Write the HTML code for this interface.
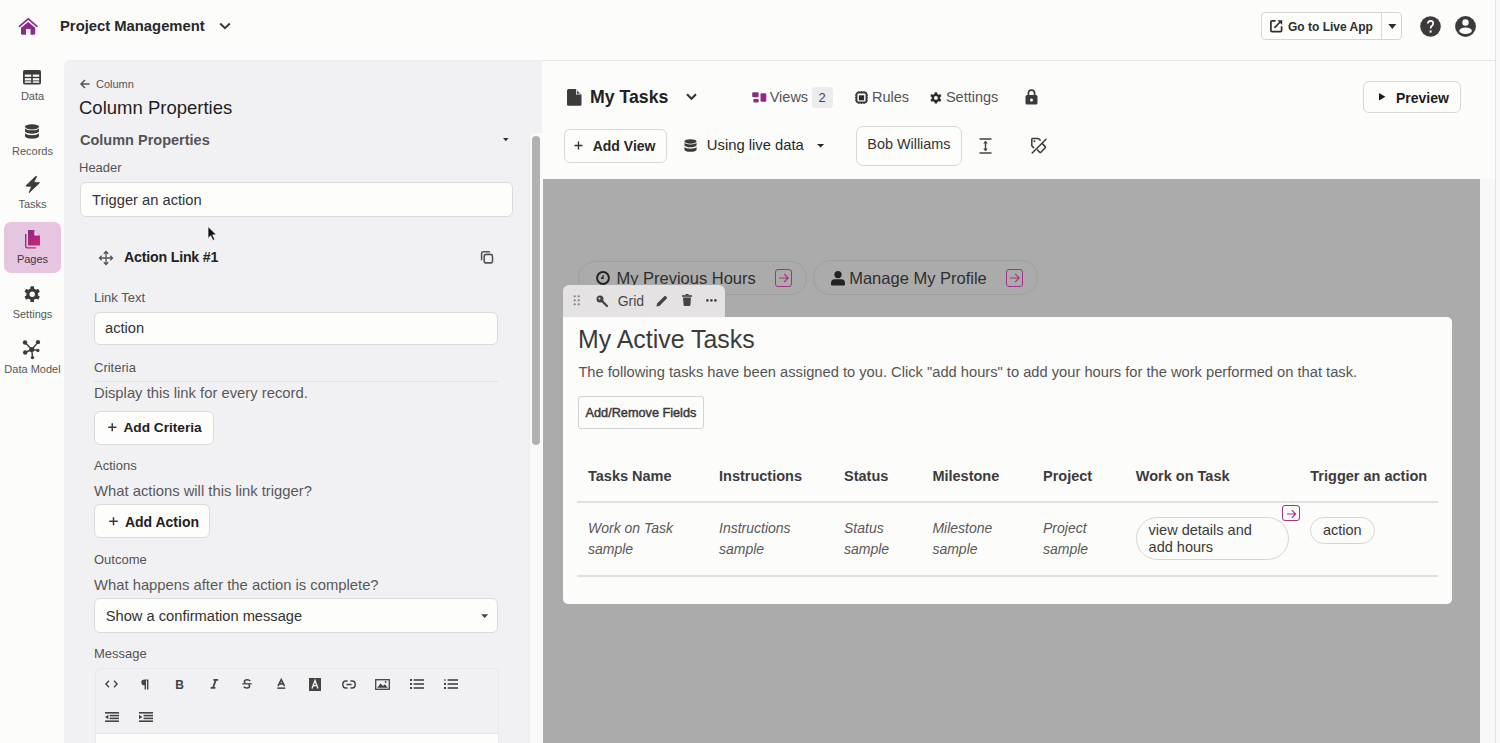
<!DOCTYPE html>
<html><head><meta charset="utf-8">
<style>
*{box-sizing:border-box;margin:0;padding:0}
html,body{width:1500px;height:743px;overflow:hidden;background:#fcfcfb;font-family:"Liberation Sans",sans-serif;color:#333}
.a{position:absolute}
.t{position:absolute;line-height:1;white-space:nowrap}
svg{position:absolute;overflow:visible}
.nav{font-size:11px;color:#5a5758;width:65px;left:0;text-align:center}
.lbl{font-size:13px;color:#555356}
.desc{font-size:14.8px;color:#5a585a}
.box{position:absolute;background:#fdfdfc;border:1px solid #dadadb;border-radius:6px}
.th{font-size:14.5px;font-weight:700;color:#3d3b3c}
.td{font-size:14px;font-style:italic;color:#5b595a;line-height:21px}
</style></head><body>

<!-- right strip -->
<div class="a" style="left:1480px;top:179px;width:15px;height:564px;background:#f8f8f8"></div>
<div class="a" style="left:1495px;top:0;width:1px;height:743px;background:#e3e3e3"></div>
<div class="a" style="left:1496px;top:0;width:4px;height:743px;background:#f9f9f9"></div>

<!-- top bar -->
<div class="a" style="left:542px;top:60px;width:953px;height:1px;background:#e6e6e6"></div>
<svg style="left:14px;top:12px" width="28" height="28" viewBox="0 0 28 28">
  <path d="M5.4 14.3 L14.2 6.9 L23 14.3" stroke="#8c2b89" stroke-width="1.7" fill="none" stroke-linecap="round"/>
  <path d="M14.2 9.9 L21.2 15.8 V21.6 Q21.2 22.7 20.1 22.7 H16.5 V17.1 H12 V22.7 H8.1 Q7 22.7 7 21.6 V15.8 Z" fill="#8c2b89"/>
</svg>
<div class="t" style="left:60px;top:19px;font-size:14.8px;font-weight:700;color:#2a2829">Project Management</div>
<svg style="left:219px;top:22px" width="12" height="8" viewBox="0 0 12 8"><path d="M1.2 1.5 L6 6.2 L10.8 1.5" stroke="#3a3839" stroke-width="2" fill="none"/></svg>

<div class="a" style="left:1261px;top:12px;width:141px;height:27.5px;border:1px solid #d6d6d6;border-radius:4px;background:#fdfdfc"></div>
<div class="a" style="left:1380.5px;top:13px;width:1px;height:25.5px;background:#dadada"></div>
<svg style="left:1270px;top:20px" width="13" height="13" viewBox="0 0 13 13">
  <path d="M5.6 0.9 H2.1 Q0.9 0.9 0.9 2.1 V10.5 Q0.9 11.6 2.1 11.6 H10.5 Q11.6 11.6 11.6 10.5 V6.3" stroke="#2f2d2e" stroke-width="1.7" fill="none"/>
  <path d="M4.3 7.9 L10.4 1.8" stroke="#2f2d2e" stroke-width="1.6"/>
  <path d="M7.4 0.2 H12.2 V5 Z" fill="#2f2d2e"/>
</svg>
<div class="t" style="left:1288px;top:20.8px;font-size:12px;font-weight:700;color:#2f2d2e">Go to Live App</div>
<svg style="left:1388px;top:24px" width="9" height="5" viewBox="0 0 9 5"><path d="M0.3 0 H8.3 L4.3 5 Z" fill="#2f2d2e"/></svg>
<svg style="left:1419.7px;top:16px" width="21" height="21" viewBox="0 0 21 21">
  <circle cx="10.5" cy="10.5" r="10.3" fill="#3d3a3b"/>
  <path d="M7.9 7.6 Q7.9 4.9 10.6 4.9 Q13.2 4.9 13.2 7.4 Q13.2 9 11.7 10 Q10.6 10.8 10.6 12.6" stroke="#fff" stroke-width="1.7" fill="none"/>
  <rect x="9.6" y="14.4" width="2" height="2.2" fill="#fff"/>
</svg>
<svg style="left:1455px;top:16px" width="21" height="21" viewBox="0 0 21 21">
  <circle cx="10.5" cy="10.5" r="10.4" fill="#3d3a3b"/>
  <circle cx="10.5" cy="6.5" r="3.2" fill="#fcfcfb"/>
  <ellipse cx="10.6" cy="14.75" rx="6.3" ry="3.2" fill="#fcfcfb"/>
</svg>

<!-- sidebar -->
<svg style="left:23px;top:70px" width="18" height="15" viewBox="0 0 18 15">
  <rect x="0" y="0" width="18" height="14.5" rx="1.8" fill="#3d3a3b"/>
  <rect x="1.8" y="4.6" width="6.4" height="2.2" fill="#fcfcfb"/><rect x="9.8" y="4.6" width="6.4" height="2.2" fill="#fcfcfb"/>
  <rect x="1.8" y="8.2" width="6.4" height="2.2" fill="#fcfcfb"/><rect x="9.8" y="8.2" width="6.4" height="2.2" fill="#fcfcfb"/>
  <rect x="1.8" y="11.3" width="6.4" height="1.5" fill="#fcfcfb"/><rect x="9.8" y="11.3" width="6.4" height="1.5" fill="#fcfcfb"/>
</svg>
<div class="t nav" style="top:91px">Data</div>
<svg style="left:25px;top:124px" width="14" height="16" viewBox="0 0 14 16">
  <ellipse cx="7" cy="2.8" rx="7" ry="2.6" fill="#3d3a3b"/>
  <path d="M0 4.4 C2 6.9 12 6.9 14 4.4 V7.6 C12 10.3 2 10.3 0 7.6 Z" fill="#3d3a3b"/>
  <path d="M0 9.3 C2 11.8 12 11.8 14 9.3 V12.6 C12 15.6 2 15.6 0 12.6 Z" fill="#3d3a3b"/>
</svg>
<div class="t nav" style="top:145.5px">Records</div>
<svg style="left:25px;top:176px" width="15" height="17" viewBox="0 0 15 17">
  <path d="M10.8 0.2 L1.2 9.4 Q0.6 10.2 1.6 10.2 H6.6 L4 16.8 L14.2 7.2 Q14.8 6.4 13.8 6.4 H8.8 L11.6 0.6 Z" fill="#3d3a3b" stroke="#3d3a3b" stroke-width="0.8" stroke-linejoin="round"/>
</svg>
<div class="t nav" style="top:198.6px">Tasks</div>
<div class="a" style="left:4px;top:222px;width:57px;height:51px;background:#e6c5e1;border-radius:7px"></div>
<svg style="left:24px;top:230px" width="17" height="19" viewBox="0 0 17 19">
  <defs><linearGradient id="pg" x1="0" y1="0" x2="1" y2="1"><stop offset="0" stop-color="#8d2a8a"/><stop offset="1" stop-color="#d0246f"/></linearGradient></defs>
  <path d="M1 4 V16.5 Q1 18.6 3.2 18.6 H12 V17.2 H3.4 Q2.4 17.2 2.4 16.2 V4 Z" fill="url(#pg)"/>
  <path d="M4 0 H10.4 L16 5.6 V15.6 H4 Z" fill="url(#pg)"/>
  <path d="M10.4 0 V5.6 H16 Z" fill="#f2d7ec"/>
</svg>
<div class="t nav" style="top:254px;color:#3d3a3b">Pages</div>
<svg style="left:24px;top:286px" width="16" height="16" viewBox="0 0 16 16"><circle cx="8.2" cy="8.2" r="5.85" fill="#3d3a3b"/><rect x="6.38" y="0.30" width="3.63" height="7.90" rx="0.65" fill="#3d3a3b" transform="rotate(0 8.2 8.2)"/><rect x="6.38" y="0.30" width="3.63" height="7.90" rx="0.65" fill="#3d3a3b" transform="rotate(60 8.2 8.2)"/><rect x="6.38" y="0.30" width="3.63" height="7.90" rx="0.65" fill="#3d3a3b" transform="rotate(120 8.2 8.2)"/><rect x="6.38" y="0.30" width="3.63" height="7.90" rx="0.65" fill="#3d3a3b" transform="rotate(180 8.2 8.2)"/><rect x="6.38" y="0.30" width="3.63" height="7.90" rx="0.65" fill="#3d3a3b" transform="rotate(240 8.2 8.2)"/><rect x="6.38" y="0.30" width="3.63" height="7.90" rx="0.65" fill="#3d3a3b" transform="rotate(300 8.2 8.2)"/><circle cx="8.2" cy="8.2" r="2.69" fill="#fcfcfb"/></svg>
<div class="t nav" style="top:308.6px">Settings</div>
<svg style="left:23px;top:340px" width="18" height="20" viewBox="0 0 18 20">
  <g stroke="#3d3a3b" stroke-width="1.4"><line x1="2" y1="2.5" x2="8.8" y2="9.5"/><line x1="15" y1="2.1" x2="8.8" y2="9.5"/><line x1="2.2" y1="12.5" x2="8.8" y2="9.5"/><line x1="14.8" y1="10.4" x2="8.8" y2="9.5"/><line x1="8.8" y1="9.5" x2="9.5" y2="17.6"/></g>
  <g fill="#3d3a3b"><circle cx="2" cy="2.5" r="2.2"/><circle cx="15" cy="2.1" r="2.2"/><circle cx="2.2" cy="12.5" r="2.2"/><circle cx="14.8" cy="10.4" r="1.7"/><circle cx="9.5" cy="17.6" r="1.7"/><circle cx="8.8" cy="9.5" r="2.6"/></g>
</svg>
<div class="t nav" style="top:364px">Data Model</div>

<!-- left panel -->
<div class="a" style="left:64px;top:59.5px;width:478px;height:684px;background:#f1f1f3;border-top-left-radius:6px;border-top:1px solid #ececee"></div>
<div class="a" style="left:529px;top:133px;width:13px;height:610px;border-top-left-radius:4px;background:#f9f9f9;border-left:1px solid #ececec"></div>
<div class="a" style="left:532px;top:135.5px;width:7.5px;height:309.5px;background:#b1b1b1;border-radius:4px"></div>

<svg style="left:80px;top:79px" width="10" height="10" viewBox="0 0 10 10"><path d="M9.6 5 H1.2 M5 1 L1 5 L5 9" stroke="#555" stroke-width="1.5" fill="none"/></svg>
<div class="t" style="left:96px;top:78.5px;font-size:11px;color:#555356">Column</div>
<div class="t" style="left:79px;top:98.6px;font-size:18.5px;color:#1f1e1f">Column Properties</div>
<div class="t" style="left:80px;top:133.2px;font-size:14.5px;font-weight:700;color:#555356">Column Properties</div>
<svg style="left:503px;top:137.7px" width="6" height="4" viewBox="0 0 6 4"><path d="M0 0 H5.6 L2.8 3.2 Z" fill="#333"/></svg>

<div class="t lbl" style="left:79px;top:161px">Header</div>
<div class="box" style="left:80px;top:182px;width:433px;height:35px"></div>
<div class="t" style="left:92px;top:193.3px;font-size:14.7px;color:#333">Trigger an action</div>

<svg style="left:207px;top:226px" width="11" height="16" viewBox="0 0 11 16">
  <path d="M1 0.6 V12.4 L3.7 9.7 L5.9 14.4 L7.8 13.5 L5.7 8.9 L9.4 8.8 Z" fill="#111" stroke="#fff" stroke-width="0.7"/>
</svg>

<svg style="left:98.5px;top:250.5px" width="14" height="14" viewBox="0 0 14 14">
  <path d="M7 0.5 V13.5 M0.5 7 H13.5 M4.8 2.7 L7 0.5 L9.2 2.7 M4.8 11.3 L7 13.5 L9.2 11.3 M2.7 4.8 L0.5 7 L2.7 9.2 M11.3 4.8 L13.5 7 L11.3 9.2" stroke="#555" stroke-width="1.3" fill="none"/>
</svg>
<div class="t" style="left:124px;top:250.4px;font-size:14.2px;letter-spacing:-0.2px;font-weight:700;color:#222">Action Link #1</div>
<svg style="left:479.5px;top:249.5px" width="15" height="15" viewBox="0 0 15 15">
  <rect x="4.2" y="4.4" width="8.3" height="8.5" rx="2" stroke="#555" stroke-width="1.6" fill="none"/>
  <path d="M1.6 10.3 V3.4 Q1.6 1.8 3.2 1.8 H9.9" stroke="#555" stroke-width="1.6" fill="none"/>
</svg>

<div class="t lbl" style="left:94px;top:291px">Link Text</div>
<div class="box" style="left:94px;top:311.7px;width:404px;height:33.5px"></div>
<div class="t" style="left:105px;top:320.9px;font-size:14.7px;color:#333">action</div>

<div class="t lbl" style="left:94px;top:360.5px">Criteria</div>
<div class="a" style="left:94px;top:380.5px;width:404px;height:1px;background:#e3e3e4"></div>
<div class="t desc" style="left:94px;top:386.2px">Display this link for every record.</div>
<div class="box" style="left:94px;top:410.5px;width:119.5px;height:34px"></div>
<svg style="left:107.5px;top:422.8px" width="9" height="9" viewBox="0 0 9 9"><path d="M4.25 0.2 V8.2 M0.2 4.2 H8.4" stroke="#3a3a3a" stroke-width="1.5"/></svg>
<div class="t" style="left:123.4px;top:420.9px;font-size:13.7px;font-weight:700;color:#222">Add Criteria</div>

<div class="t lbl" style="left:94px;top:459px">Actions</div>
<div class="t desc" style="left:94px;top:483.7px">What actions will this link trigger?</div>
<div class="box" style="left:94px;top:504.3px;width:116px;height:34px"></div>
<svg style="left:108.5px;top:517px" width="10" height="9" viewBox="0 0 10 9"><path d="M4.5 0.2 V8.2 M0.2 4.2 H8.8" stroke="#3a3a3a" stroke-width="1.5"/></svg>
<div class="t" style="left:124.9px;top:515.2px;font-size:14px;font-weight:700;color:#222">Add Action</div>

<div class="t lbl" style="left:94px;top:553.4px">Outcome</div>
<div class="t desc" style="left:94px;top:578.2px">What happens after the action is complete?</div>
<div class="box" style="left:94px;top:598px;width:404px;height:34.5px"></div>
<div class="t" style="left:105.8px;top:609.1px;font-size:14.67px;color:#333">Show a confirmation message</div>
<svg style="left:481px;top:614px" width="8" height="5" viewBox="0 0 8 5"><path d="M0.2 0.2 H7.2 L3.7 3.9 Z" fill="#444"/></svg>

<div class="t lbl" style="left:94px;top:647.2px">Message</div>
<div class="a" style="left:94.5px;top:668px;width:404px;height:90px;border:1px solid #e8e8ea;border-radius:6px;background:#f1f1f3"></div>
<div class="a" style="left:95.5px;top:732.5px;width:402px;height:20px;background:#fdfdfc;border-top:1px solid #e6e6e8"></div>

<svg style="left:105px;top:680px" width="13" height="8" viewBox="0 0 13 8"><path d="M4 0.8 L0.9 4 L4 7.2 M9 0.8 L12.1 4 L9 7.2" stroke="#444" stroke-width="1.4" fill="none"/></svg>
<svg style="left:141px;top:678.5px" width="8" height="11" viewBox="0 0 8 11"><path d="M3.6 0.5 Q0.3 0.5 0.3 3.4 Q0.3 6.2 3.6 6.2 V10.5 H5 V1.6 H6 V10.5 H7.4 V0.5 Z" fill="#444"/></svg>
<div class="t" style="left:175.3px;top:679.2px;font-size:12px;font-weight:700;color:#444">B</div>
<svg style="left:209.5px;top:679px" width="9" height="10" viewBox="0 0 9 10"><path d="M3.4 0.9 H8.2 M0.6 8.9 H5.4 M5.8 0.9 L3 8.9" stroke="#444" stroke-width="1.7" fill="none"/></svg>
<svg style="left:242px;top:679px" width="10" height="10" viewBox="0 0 10 10"><path d="M8.2 2.1 Q7.4 0.8 5.2 0.8 Q2.4 0.8 2.4 2.8 Q2.4 3.7 3.4 4.2 M6.4 5.4 Q7.6 6 7.6 7.1 Q7.6 9.1 4.9 9.1 Q2.5 9.1 1.8 7.7" stroke="#444" stroke-width="1.5" fill="none"/><path d="M0.3 4.8 H9.7" stroke="#444" stroke-width="1.3"/></svg>
<svg style="left:276.5px;top:679px" width="9" height="10" viewBox="0 0 9 10"><path d="M1 7.2 L4.25 0.6 L7.5 7.2 M2.3 4.9 H6.2" stroke="#444" stroke-width="1.6" fill="none"/><rect x="0.3" y="8.4" width="8" height="1.5" fill="#444"/></svg>
<svg style="left:308.5px;top:677.5px" width="12" height="13" viewBox="0 0 12 13"><rect x="0" y="0" width="12" height="13" fill="#444"/><path d="M3 10.5 L6 2.5 L9 10.5 M4.1 7.6 H7.9" stroke="#f1f1f2" stroke-width="1.4" fill="none"/></svg>
<svg style="left:341.5px;top:679.5px" width="14" height="9" viewBox="0 0 14 9"><path d="M5.6 1 H3.8 Q0.8 1 0.8 4.5 Q0.8 8 3.8 8 H5.6 M8.4 1 H10.2 Q13.2 1 13.2 4.5 Q13.2 8 10.2 8 H8.4 M4.4 4.5 H9.6" stroke="#444" stroke-width="1.5" fill="none"/></svg>
<svg style="left:374.5px;top:678.5px" width="15" height="11" viewBox="0 0 15 11"><rect x="0.7" y="0.7" width="13.6" height="9.6" stroke="#444" stroke-width="1.3" fill="none"/><path d="M2.2 8.8 L5.6 4.6 L8 7 L10 5.2 L12.8 8.8 Z" fill="#444"/><circle cx="10.6" cy="3" r="0.9" fill="#444"/></svg>
<svg style="left:409.5px;top:679px" width="14" height="10" viewBox="0 0 14 10"><g fill="#444"><rect x="0" y="0" width="2" height="2"/><rect x="0" y="4" width="2" height="2"/><rect x="0" y="8" width="2" height="2"/><rect x="3.6" y="0.2" width="10.4" height="1.6"/><rect x="3.6" y="4.2" width="10.4" height="1.6"/><rect x="3.6" y="8.2" width="10.4" height="1.6"/></g></svg>
<svg style="left:443.5px;top:679px" width="14" height="10" viewBox="0 0 14 10"><g fill="#444"><rect x="0.4" y="0" width="1" height="2"/><rect x="0" y="4" width="2" height="2"/><rect x="0" y="8" width="2" height="2"/><rect x="3.6" y="0.2" width="10.4" height="1.6"/><rect x="3.6" y="4.2" width="10.4" height="1.6"/><rect x="3.6" y="8.2" width="10.4" height="1.6"/></g></svg>
<svg style="left:104.5px;top:711.5px" width="14" height="10" viewBox="0 0 14 10"><g fill="#444"><rect x="0" y="0" width="14" height="1.6"/><rect x="4.6" y="2.8" width="9.4" height="1.6"/><rect x="4.6" y="5.6" width="9.4" height="1.6"/><rect x="0" y="8.4" width="14" height="1.6"/><path d="M0 5 L3.4 2.8 V7.2 Z"/></g></svg>
<svg style="left:138.5px;top:711.5px" width="14" height="10" viewBox="0 0 14 10"><g fill="#444"><rect x="0" y="0" width="14" height="1.6"/><rect x="4.6" y="2.8" width="9.4" height="1.6"/><rect x="4.6" y="5.6" width="9.4" height="1.6"/><rect x="0" y="8.4" width="14" height="1.6"/><path d="M3.4 5 L0 2.8 V7.2 Z"/></g></svg>


<!-- page header -->
<svg style="left:567px;top:89px" width="15" height="17" viewBox="0 0 15 17">
  <path d="M1.6 0 H9 L14.5 5.5 V15.2 Q14.5 16.8 12.9 16.8 H1.6 Q0 16.8 0 15.2 V1.6 Q0 0 1.6 0 Z" fill="#3d3a3b"/>
  <path d="M9 0 V5.5 H14.5 Z" fill="#fcfcfb"/><path d="M9.8 1.6 L12.9 4.7 H9.8 Z" fill="#3d3a3b"/>
</svg>
<div class="t" style="left:590px;top:89px;font-size:17.7px;font-weight:700;color:#222">My Tasks</div>
<svg style="left:686px;top:93px" width="11" height="8" viewBox="0 0 11 8"><path d="M1 1.2 L5.5 5.8 L10 1.2" stroke="#333" stroke-width="2" fill="none"/></svg>

<svg style="left:751.5px;top:92px" width="15" height="11" viewBox="0 0 15 11">
  <rect x="0.2" y="0.3" width="6.4" height="4.9" rx="1.2" fill="#8e2a86"/>
  <rect x="1.3" y="6.9" width="5.4" height="3.7" rx="1.1" fill="#8e2a86"/>
  <rect x="8.5" y="1.3" width="5.8" height="8.5" rx="1.2" fill="#8e2a86"/>
</svg>
<div class="t" style="left:769.7px;top:90.3px;font-size:14.5px;color:#555356">Views</div>
<div class="a" style="left:812px;top:87px;width:21px;height:21px;background:#ececec;border-radius:4px"></div>
<div class="t" style="left:818.5px;top:91.2px;font-size:13px;color:#444">2</div>

<svg style="left:854.5px;top:90.5px" width="13" height="13" viewBox="0 0 13 13">
  <rect x="1.5" y="1.5" width="10" height="10" rx="2" stroke="#3d3a3b" stroke-width="1.9" fill="none"/>
  <rect x="3.9" y="4.3" width="5.2" height="5" fill="#2a2829"/>
  <path d="M4 0 V1.5 M6.5 0 V1.5 M9 0 V1.5 M4 11.5 V13 M6.5 11.5 V13 M9 11.5 V13 M0 4 H1.5 M0 6.5 H1.5 M0 9 H1.5 M11.5 4 H13 M11.5 6.5 H13 M11.5 9 H13" stroke="#3d3a3b" stroke-width="1"/>
</svg>
<div class="t" style="left:872px;top:90.3px;font-size:14.5px;color:#555356">Rules</div>
<svg style="left:929.5px;top:91.5px" width="12" height="12" viewBox="0 0 12 12"><circle cx="5.9" cy="5.9" r="4.22" fill="#2e2c2d"/><rect x="4.59" y="0.20" width="2.62" height="5.70" rx="0.47" fill="#2e2c2d" transform="rotate(0 5.9 5.9)"/><rect x="4.59" y="0.20" width="2.62" height="5.70" rx="0.47" fill="#2e2c2d" transform="rotate(60 5.9 5.9)"/><rect x="4.59" y="0.20" width="2.62" height="5.70" rx="0.47" fill="#2e2c2d" transform="rotate(120 5.9 5.9)"/><rect x="4.59" y="0.20" width="2.62" height="5.70" rx="0.47" fill="#2e2c2d" transform="rotate(180 5.9 5.9)"/><rect x="4.59" y="0.20" width="2.62" height="5.70" rx="0.47" fill="#2e2c2d" transform="rotate(240 5.9 5.9)"/><rect x="4.59" y="0.20" width="2.62" height="5.70" rx="0.47" fill="#2e2c2d" transform="rotate(300 5.9 5.9)"/><circle cx="5.9" cy="5.9" r="1.94" fill="#fcfcfb"/></svg>
<div class="t" style="left:945.9px;top:90.3px;font-size:14.5px;color:#555356">Settings</div>
<svg style="left:1024.5px;top:89px" width="13" height="17" viewBox="0 0 13 17">
  <path d="M3.4 6.5 V4.3 Q3.4 1.1 6.5 1.1 Q9.6 1.1 9.6 4.3 V6.5" stroke="#3d3a3b" stroke-width="1.7" fill="none"/>
  <rect x="0.5" y="5.9" width="12" height="9.7" rx="1.7" fill="#3d3a3b"/>
  <circle cx="6.5" cy="11" r="1.5" fill="#fcfcfb"/>
</svg>

<div class="a" style="left:1363px;top:81.4px;width:97.8px;height:32px;border:1px solid #d8d8d8;border-radius:6px;background:#fdfdfc"></div>
<svg style="left:1378.8px;top:93.4px" width="7" height="8" viewBox="0 0 7 8"><path d="M0 0 L6.4 3.8 L0 7.6 Z" fill="#1e1d1e"/></svg>
<div class="t" style="left:1396px;top:90.7px;font-size:14px;font-weight:700;color:#1e1d1e">Preview</div>

<div class="a" style="left:564.3px;top:128.7px;width:102.5px;height:34px;border:1px solid #d8d8d8;border-radius:6px;background:#fdfdfc"></div>
<svg style="left:574px;top:141px" width="9" height="9" viewBox="0 0 9 9"><path d="M4.5 0.5 V8.5 M0.5 4.5 H8.5" stroke="#333" stroke-width="1.4"/></svg>
<div class="t" style="left:592.7px;top:138.6px;font-size:14px;font-weight:700;color:#2a2829">Add View</div>
<svg style="left:684px;top:139px" width="13" height="13" viewBox="0 0 14 15">
  <ellipse cx="7" cy="2.8" rx="7" ry="2.6" fill="#3d3a3b"/>
  <path d="M0 4.4 C2 6.9 12 6.9 14 4.4 V7.6 C12 10.3 2 10.3 0 7.6 Z" fill="#3d3a3b"/>
  <path d="M0 9.3 C2 11.8 12 11.8 14 9.3 V12.6 C12 15.6 2 15.6 0 12.6 Z" fill="#3d3a3b"/>
</svg>
<div class="t" style="left:706.8px;top:137.9px;font-size:14.8px;color:#2a2829">Using live data</div>
<svg style="left:817px;top:144px" width="8" height="4" viewBox="0 0 8 4"><path d="M0 0 H7.2 L3.6 3.4 Z" fill="#2a2829"/></svg>

<div class="a" style="left:856px;top:126px;width:106px;height:39.6px;border:1px solid #d8d8d8;border-radius:7px;background:#fdfdfc"></div>
<div class="t" style="left:867.3px;top:136.8px;font-size:14.4px;color:#333">Bob Williams</div>
<svg style="left:979px;top:137.5px" width="13" height="16" viewBox="0 0 13 16">
  <path d="M0.5 1 H12.5 M0.5 15 H12.5 M6.5 3.2 V12.8" stroke="#444" stroke-width="1.4"/>
  <path d="M4.2 5.4 L6.5 2.8 L8.8 5.4 Z M4.2 10.6 L6.5 13.2 L8.8 10.6 Z" fill="#444"/>
</svg>
<svg style="left:1030px;top:137px" width="18" height="18" viewBox="0 0 18 18">
  <g stroke="#3d3a3b" stroke-width="1.5" fill="none" stroke-linecap="round" stroke-linejoin="round">
  <path d="M3.6 10.6 L1.8 8.8 V2.2 Q1.8 1.5 2.5 1.5 H8 Q8.6 1.5 9.2 2.1 L10.2 3.2"/>
  <path d="M12.3 6.6 L15.3 9.6 Q15.9 10.2 15.3 10.8 L10.9 15.2 Q10.3 15.8 9.7 15.2 L7.6 13.1"/>
  <path d="M16 2.2 L2.2 16"/>
  </g>
  <circle cx="4.4" cy="4.3" r="1" fill="#3d3a3b"/>
</svg>

<!-- canvas -->
<div class="a" style="left:543px;top:179px;width:937px;height:564px;background:#ababab"></div>

<!-- pills -->
<div class="a" style="left:578px;top:260.6px;width:228.5px;height:34.6px;border:1px solid #9f9f9d;border-radius:18px"></div>
<svg style="left:596.4px;top:270.6px" width="14" height="14" viewBox="0 0 14 14">
  <circle cx="7" cy="7" r="5.9" stroke="#222" stroke-width="2" fill="none"/>
  <path d="M7 4.2 V7.2 H5" stroke="#222" stroke-width="1.4" fill="none"/>
</svg>
<div class="t" style="left:616.4px;top:269.8px;font-size:16.5px;color:#2f2e2e">My Previous Hours</div>
<div class="a" style="left:774.8px;top:269.4px;width:17.6px;height:17.3px;border:1.3px solid #a3338a;border-radius:3px"></div>
<svg style="left:777.5px;top:273px" width="12" height="10" viewBox="0 0 12 10"><path d="M1 5 H10.2 M6.2 1 L10.2 5 L6.2 9" stroke="#b02e84" stroke-width="1.15" fill="none"/></svg>

<div class="a" style="left:812.5px;top:260.3px;width:225.5px;height:35px;border:1px solid #9f9f9d;border-radius:18px"></div>
<svg style="left:830.8px;top:270.8px" width="14" height="15" viewBox="0 0 14 15">
  <circle cx="7" cy="3.6" r="3.6" fill="#222"/>
  <path d="M0 12.6 Q0 8.2 3.6 8.2 H10.4 Q14 8.2 14 12.6 V13.2 Q14 14.4 12.8 14.4 H1.2 Q0 14.4 0 13.2 Z" fill="#222"/>
</svg>
<div class="t" style="left:849.2px;top:269.7px;font-size:16.5px;color:#2f2e2e">Manage My Profile</div>
<div class="a" style="left:1005.8px;top:269.2px;width:17.5px;height:17.5px;border:1.3px solid #a3338a;border-radius:3px"></div>
<svg style="left:1008.5px;top:273px" width="12" height="10" viewBox="0 0 12 10"><path d="M1 5 H10.2 M6.2 1 L10.2 5 L6.2 9" stroke="#b02e84" stroke-width="1.15" fill="none"/></svg>

<!-- grid toolbar -->
<div class="a" style="left:563px;top:285px;width:162px;height:32px;background:#e4e2e3;border-radius:6px 6px 0 0"></div>
<svg style="left:573px;top:295px" width="8" height="12" viewBox="0 0 8 12"><g fill="#858384"><circle cx="1.7" cy="1.3" r="1.15"/><circle cx="5.7" cy="1.3" r="1.15"/><circle cx="1.7" cy="5.3" r="1.15"/><circle cx="5.7" cy="5.3" r="1.15"/><circle cx="1.7" cy="9.3" r="1.15"/><circle cx="5.7" cy="9.3" r="1.15"/></g></svg>
<svg style="left:596.4px;top:294.5px" width="12" height="12" viewBox="0 0 12 12">
  <circle cx="4" cy="4" r="3.5" fill="#444"/><circle cx="3.4" cy="3.4" r="1" fill="#e5e3e4"/>
  <path d="M5.6 5.6 L11 11" stroke="#444" stroke-width="2.2" stroke-linecap="round"/>
</svg>
<div class="t" style="left:617.7px;top:293.5px;font-size:14px;color:#4a4849">Grid</div>
<svg style="left:656.4px;top:294.5px" width="12" height="12" viewBox="0 0 12 12">
  <path d="M0.5 11.5 L1 8.6 L8.4 1.2 Q9.1 0.5 9.8 1.2 L10.8 2.2 Q11.5 2.9 10.8 3.6 L3.4 11 Z" fill="#444"/>
</svg>
<svg style="left:682px;top:294px" width="10" height="12" viewBox="0 0 10 12">
  <rect x="0" y="1.2" width="10" height="1.6" fill="#444"/><rect x="3.4" y="0" width="3.2" height="1.4" fill="#444"/>
  <path d="M1 3.4 H9 L8.4 11 Q8.3 12 7.4 12 H2.6 Q1.7 12 1.6 11 Z" fill="#444"/>
</svg>
<svg style="left:706px;top:299px" width="11" height="3" viewBox="0 0 11 3"><g fill="#444"><circle cx="1.4" cy="1.4" r="1.3"/><circle cx="5.4" cy="1.4" r="1.3"/><circle cx="9.4" cy="1.4" r="1.3"/></g></svg>

<!-- card -->
<div class="a" style="left:563px;top:316.5px;width:889px;height:287.2px;background:#fcfcfb;border-radius:0 5px 5px 5px"></div>
<div class="t" style="left:578px;top:327px;font-size:24.9px;color:#3b3b3b">My Active Tasks</div>
<div class="t" style="left:578.4px;top:364.7px;font-size:14.7px;color:#555">The following tasks have been assigned to you. Click "add hours" to add your hours for the work performed on that task.</div>
<div class="a" style="left:578.4px;top:396.3px;width:125.2px;height:32.6px;border:1px solid #d3d3d3;border-radius:3px"></div>
<div class="t" style="left:585.6px;top:407.3px;font-size:12.7px;font-weight:400;-webkit-text-stroke:0.45px #3a3838;color:#3a3838">Add/Remove Fields</div>

<div class="t th" style="left:588px;top:469.1px">Tasks Name</div>
<div class="t th" style="left:719px;top:469.1px">Instructions</div>
<div class="t th" style="left:844px;top:469.1px">Status</div>
<div class="t th" style="left:932.4px;top:469.1px">Milestone</div>
<div class="t th" style="left:1043px;top:469.1px">Project</div>
<div class="t th" style="left:1135.8px;top:469.1px">Work on Task</div>
<div class="t th" style="left:1310.3px;top:469.1px">Trigger an action</div>
<div class="a" style="left:577.4px;top:501px;width:861px;height:1.6px;background:#e0e0e1"></div>

<div class="a td" style="left:588px;top:518px;white-space:pre">Work on Task
sample</div>
<div class="a td" style="left:719px;top:518px;white-space:pre">Instructions
sample</div>
<div class="a td" style="left:844px;top:518px;white-space:pre">Status
sample</div>
<div class="a td" style="left:932.4px;top:518px;white-space:pre">Milestone
sample</div>
<div class="a td" style="left:1043px;top:518px;white-space:pre">Project
sample</div>

<div class="a" style="left:1135.8px;top:517.3px;width:153.6px;height:43px;border:1px solid #d5d5d5;border-radius:22px"></div>
<div class="a" style="left:1148.6px;top:522px;font-size:14.5px;line-height:16.8px;color:#3a3a3a;white-space:pre">view details and
add hours</div>
<div class="a" style="left:1282.4px;top:505.2px;width:17.6px;height:16.2px;border:1.3px solid #a3338a;border-radius:3px;background:#fcfcfb"></div>
<svg style="left:1285.5px;top:508.5px" width="12" height="10" viewBox="0 0 12 10"><path d="M1 5 H9.6 M5.8 1.2 L9.6 5 L5.8 8.8" stroke="#b02e84" stroke-width="1.15" fill="none"/></svg>
<div class="a" style="left:1310.3px;top:517.3px;width:65px;height:26.8px;border:1px solid #d5d5d5;border-radius:14px"></div>
<div class="t" style="left:1322.9px;top:523.4px;font-size:14.5px;color:#3a3a3a">action</div>
<div class="a" style="left:577.4px;top:575px;width:861px;height:1.5px;background:#e0e0e1"></div>


</body></html>
